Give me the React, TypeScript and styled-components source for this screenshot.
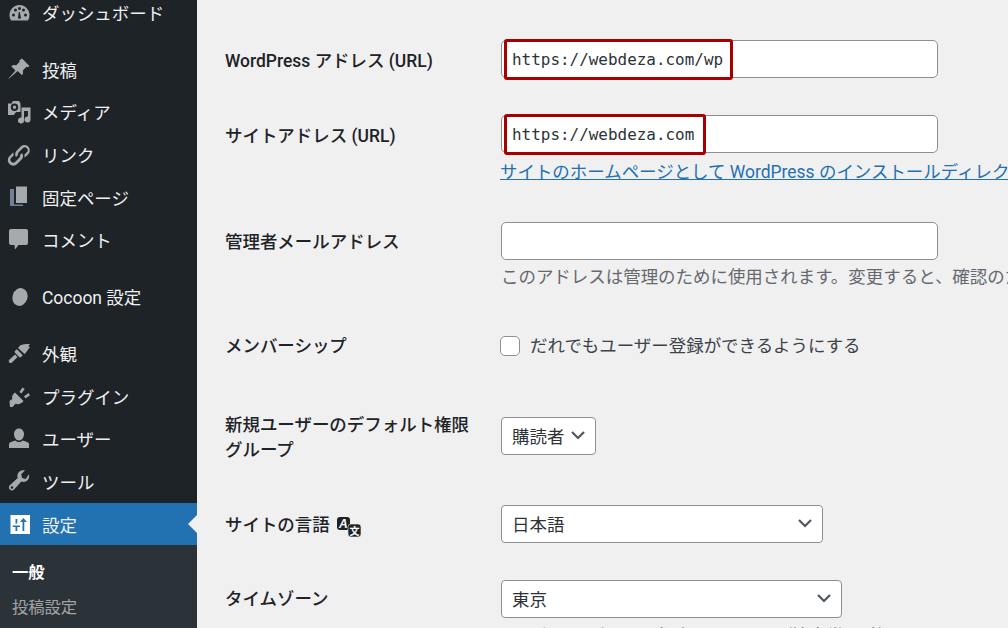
import React from "react";
import styled, { createGlobalStyle } from "styled-components";

const JP = `Roboto, "Noto Sans CJK JP", sans-serif`;

const Global = createGlobalStyle`
  html, body { margin: 0; padding: 0; height: 628px; overflow: hidden; background: #f0f0f1; }
  body { font-family: ${JP}; }
  * { box-sizing: border-box; }
`;

const Page = styled.div`
  display: flex;
  width: 1008px;
  height: 628px;
  overflow: hidden;
  font-family: ${JP};
`;
const Sidebar = styled.nav`
  flex: none;
  width: 197px;
  height: 628px;
  background: #1d2327;
  overflow: hidden;
`;
const Menu = styled.ul`
  list-style: none;
  margin: -8.8px 0 0;
  padding: 0;
`;
const MenuItem = styled.li<{ $active?: boolean; $gap?: boolean }>`
  position: relative;
  display: flex;
  align-items: center;
  height: 42.7px;
  margin-top: ${(p) => (p.$gap ? "14px" : "0")};
  padding-left: 7px;
  gap: 11px;
  font-size: 17.47px;
  color: #f0f0f1;
  background: ${(p) => (p.$active ? "#2271b1" : "transparent")};
  svg { flex: none; width: 24px; height: 24px; fill: ${(p) => (p.$active ? "#fff" : "#a7aaad")}; }
`;
const Notch = styled.span`
  position: absolute;
  right: 0;
  top: 50%;
  margin-top: -9px;
  border: 9px solid transparent;
  border-left-width: 0;
  border-right-color: #f0f0f1;
`;
const SubMenu = styled.ul`
  list-style: none;
  margin: 0;
  padding: 8px 0 0;
  height: 200px;
  background: #2c3338;
`;
const SubItem = styled.li<{ $current?: boolean }>`
  height: 35px;
  display: flex;
  align-items: center;
  padding-left: 12px;
  font-size: 16.3px;
  font-weight: ${(p) => (p.$current ? 700 : 400)};
  color: ${(p) => (p.$current ? "#fff" : "#c3c4c7cc")};
`;
const Main = styled.main`
  flex: 1;
  min-width: 0;
  padding: 40px 0 0 28px;
  background: #f0f0f1;
  color: #3c434a;
`;
const Row = styled.div<{ $h: number }>`
  display: grid;
  grid-template-columns: 276px 1fr;
  height: ${(p) => p.$h}px;
`;
const Label = styled.div<{ $pt?: number }>`
  font-size: 17.47px;
  font-weight: 500;
  line-height: 25px;
  color: #1d2327;
  padding-top: ${(p) => p.$pt ?? 9}px;
  display: flex;
  align-items: flex-start;
  gap: 7px;
`;
const Field = styled.div`
  min-width: 0;
  white-space: nowrap;
`;
const InputBox = styled.div`
  position: relative;
  width: 437px;
  height: 38px;
  background: #fff;
  border: 1px solid #8c8f94;
  border-radius: 5px;
  padding: 1px 0 0 10px;
  display: flex;
  align-items: center;
  font-family: "DejaVu Sans Mono", monospace;
  font-size: 15.95px;
  color: #2c3338;
`;
const Highlight = styled.span<{ $w: number }>`
  position: absolute;
  left: 2px;
  top: -2px;
  width: ${(p) => p.$w}px;
  height: 41px;
  border: 3px solid #a80000;
  border-radius: 3px;
`;
const LinkText = styled.a`
  display: block;
  margin: 9px 0 0 -1px;
  font-size: 17.47px;
  line-height: 20px;
  color: #2271b1;
  text-decoration: underline;
`;
const Help = styled.p`
  margin: 5px 0 0;
  font-size: 17.47px;
  line-height: 24px;
  color: #646970;
`;
const CheckRow = styled.div`
  display: flex;
  align-items: center;
  gap: 10px;
  padding-top: 7px;
  margin-left: -1px;
  font-size: 17.47px;
  line-height: 24px;
  color: #3c434a;
`;
const Check = styled.span`
  width: 20px;
  height: 20px;
  background: #fff;
  border: 1px solid #8c8f94;
  border-radius: 5px;
`;
const Select = styled.div<{ $w: number; $mt?: number }>`
  display: flex;
  align-items: center;
  justify-content: space-between;
  width: ${(p) => p.$w}px;
  height: 38px;
  margin-top: ${(p) => p.$mt ?? 0}px;
  padding: 0 9px 2px 10px;
  background: #fff;
  border: 1px solid #8c8f94;
  border-radius: 4px;
  font-size: 17.47px;
  color: #2c3338;
  svg { width: 16px; height: 16px; stroke: #50575e; fill: none; stroke-width: 2.2; }
`;
const Cut = styled.p`
  margin: 6px 0 0;
  font-size: 17.47px;
  line-height: 24px;
  color: #646970;
`;

const Chevron = () => (
  <svg viewBox="0 0 16 16"><path d="M2 5l6 6 6-6" /></svg>
);

const icons: Record<string, React.ReactNode> = {
  dash: <path transform="translate(.5 1)" d="M12 3C6.500 3 2 7.500 2 13c0 2 .6 4 1.600 5.500h16.800C21.400 17 22 15 22 13c0-5.500-4.500-10-10-10zM6 14.500a1.500 1.500 0 1 1 0-3 1.500 1.500 0 0 1 0 3zm2-5a1.500 1.500 0 1 1 0-3 1.500 1.500 0 0 1 0 3zM12 8a1.500 1.500 0 1 1 0-3 1.500 1.500 0 0 1 0 3zm1.600 8.500h-3.200l.9-6.500 1 0zM18 14.500a1.500 1.500 0 1 1 0-3 1.500 1.500 0 0 1 0 3zm-2-5a1.500 1.500 0 1 1 0-3 1.500 1.500 0 0 1 0 3z" />,
  pin: <path d="M15 1.500l7.500 7.500-1.700 1.200-1.300-.5-3.700 3.700c.6 1.800.2 3.500-.8 4.800l-4.300-4.300L1.500 22l-.2-.2 7.200-8.300-4.300-4.300c1.300-1 3-1.400 4.800-.8l3.700-3.700-.5-1.300z" />,
  media: <path fillRule="evenodd" d="M1 3.500h3.500L6 1h6l1.500 2.500V12H9.500a5 5 0 0 0-2.500 3H1zM7.500 11a3.700 3.700 0 1 0 0-7.400 3.700 3.700 0 0 0 0 7.400zm0-2a1.700 1.700 0 1 1 0-3.400 1.700 1.700 0 0 1 0 3.400zM23.500 7.500V19.500a3 3 0 1 1-2.500-3V11h-4v9.500a3 3 0 1 1-2.500-3v-10z" />,
  link: <path fillRule="evenodd" d="M17.500 2c-1.400 0-2.700.5-3.700 1.500l-4 4a5.500 5.500 0 0 0-.8 6.600l2-2a3 3 0 0 1 .8-2.800l4-4a2.800 2.800 0 0 1 4 4l-2.500 2.500c.3.900.5 1.900.4 3l4-4A5.500 5.500 0 0 0 17.500 2zm-2.500 8l-2 2c.3 1 .1 2-.7 2.800l-4 4a2.800 2.800 0 0 1-4-4L6.800 12.300c-.3-.9-.5-1.900-.4-3l-4 4a5.500 5.500 0 0 0 7.800 7.800l4-4a5.500 5.500 0 0 0 .8-7.100z" />,
  page: <g><path d="M9 1.500h11V18H9z" /><path d="M7 4H3v17h13v-1.500H7z" fill="#6f8296" /></g>,
  comment: <path d="M4 1h15a2 2 0 0 1 2 2v12a2 2 0 0 1-2 2h-7.500L8 21.500 7.500 17H4a2 2 0 0 1-2-2V3a2 2 0 0 1 2-2z" />,
  cocoon: <ellipse cx="13" cy="12" rx="7.500" ry="9" transform="rotate(18 13 12)" />,
  brush: <path d="M13 4.500c2.500-1.500 5.500-1.500 10-1.500-1 1-1.500 2-1.500 2.500L23 6c-1.500 2-3 4.500-5.500 7L11 7zM9.800 8.200l6 6-1.800 1.800c-.5.500-1.300.5-1.800 0l-4.200-4.200c-.5-.5-.5-1.300 0-1.800zM8 13.500l2.500 2.500-5.500 5.500c-.8.700-2 .7-2.700 0s-.7-2 0-2.700z" />,
  plug: <path d="M15.500 3.500l2.200 1.600-3.200 4.400-2.200-1.600zM21.500 9l1.500 2.200-4.500 3.200-1.500-2.200zM8 8.500l8.500 8.500c-2 2.800-5 3.800-8 2.800L5.500 23H3l-.5-6 2.800-2c-.7-2.500.2-4.500 2.700-6.500z" />,
  user: <path d="M12 1.500c3 0 5 2.500 5 5.500s-2 6.500-5 6.500S7 10 7 7s2-5.500 5-5.500zM2 21v-3.500c0-1 .5-1.800 1.500-2.200 1.500-.7 3.500-1.300 5-1.800 1 1 2.200 1.500 3.500 1.500s2.500-.5 3.500-1.500c1.500.5 3.500 1.100 5 1.800 1 .4 1.500 1.200 1.500 2.200V21z" />,
  wrench: <path fillRule="evenodd" d="M21.800 5.200c.8 2.100.3 4.500-1.300 6.100-1.700 1.700-4.100 2.100-6.200 1.300L7.100 20.400a3 3 0 0 1-4.300.1c-1.200-1.200-1.200-3.100 0-4.300l7.900-7.100c-.8-2.100-.3-4.500 1.300-6.100C13.700 1.300 16 .8 18 1.500l-3.800 3.700.9 3.700 3.700 1zM5 19.800a1.300 1.300 0 1 0 0-2.600 1.300 1.300 0 0 0 0 2.600z" />,
  sliders: <path fillRule="evenodd" d="M3.500 3h19.500v19H3.500zM8.500 19h1.800v-4h2.700v-1.500H5.800V15h2.700zM15.500 19h1.800V10H20l-3.600-4L13 10h2.500zM8.500 7v4.500h1.800V7z" />,
};

const Ico = ({ n }: { n: string }) => <svg viewBox="0 0 24 24">{icons[n]}</svg>;

const items: { n: string; t: string; gap?: boolean; active?: boolean }[] = [
  { n: "dash", t: "ダッシュボード" },
  { n: "pin", t: "投稿", gap: true },
  { n: "media", t: "メディア" },
  { n: "link", t: "リンク" },
  { n: "page", t: "固定ページ" },
  { n: "comment", t: "コメント" },
  { n: "cocoon", t: "Cocoon 設定", gap: true },
  { n: "brush", t: "外観", gap: true },
  { n: "plug", t: "プラグイン" },
  { n: "user", t: "ユーザー" },
  { n: "wrench", t: "ツール" },
  { n: "sliders", t: "設定", active: true },
];

const Translate = styled.svg`
  width: 24px;
  height: 24px;
  flex: none;
  margin-top: 4px;
`;

export default function App() {
  return (
    <>
      <Global />
      <Page>
        <Sidebar>
          <Menu>
            {items.map((i) => (
              <MenuItem key={i.t} $gap={i.gap} $active={i.active}>
                <Ico n={i.n} />
                <span>{i.t}</span>
                {i.active && <Notch />}
              </MenuItem>
            ))}
          </Menu>
          <SubMenu>
            <SubItem $current>一般</SubItem>
            <SubItem>投稿設定</SubItem>
          </SubMenu>
        </Sidebar>
        <Main>
          <Row $h={75}>
            <Label>WordPress アドレス (URL)</Label>
            <Field>
              <InputBox>https://webdeza.com/wp<Highlight $w={229} /></InputBox>
            </Field>
          </Row>
          <Row $h={107}>
            <Label>サイトアドレス (URL)</Label>
            <Field>
              <InputBox>https://webdeza.com<Highlight $w={202} /></InputBox>
              <LinkText>サイトのホームページとして WordPress のインストールディレクトリとは異なる場所を設定する</LinkText>
            </Field>
          </Row>
          <Row $h={105}>
            <Label $pt={8}>管理者メールアドレス</Label>
            <Field>
              <InputBox />
              <Help>このアドレスは管理のために使用されます。変更すると、確認のため新しいアドレスにメールを送信します。</Help>
            </Field>
          </Row>
          <Row $h={77}>
            <Label $pt={7}>メンバーシップ</Label>
            <Field>
              <CheckRow><Check />だれでもユーザー登録ができるようにする</CheckRow>
            </Field>
          </Row>
          <Row $h={101}>
            <Label $pt={9}>新規ユーザーのデフォルト権限<br />グループ</Label>
            <Field>
              <Select $w={95} $mt={13}>購読者<Chevron /></Select>
            </Field>
          </Row>
          <Row $h={75}>
            <Label $pt={8}>
              サイトの言語
              <Translate viewBox="0 0 24 24">
                <rect x="0" y="0" width="13" height="13" rx="3" fill="#1d2327" />
                <text x="2" y="11" fontSize="12" fontWeight="700" fontStyle="italic" fill="#fff" fontFamily="Liberation Sans">A</text>
                <rect x="11" y="7" width="13" height="13" rx="3" fill="#1d2327" stroke="#f0f0f1" strokeWidth=".6" />
                <text x="12.500" y="18" fontSize="10" fontWeight="700" fill="#fff" fontFamily="Noto Sans CJK SC">文</text>
              </Translate>
            </Label>
            <Field>
              <Select $w={322}>日本語<Chevron /></Select>
            </Field>
          </Row>
          <Row $h={60}>
            <Label $pt={7}>タイムゾーン</Label>
            <Field>
              <Select $w={341}>東京<Chevron /></Select>
              <Cut>同じタイムゾーンの都市または UTC (協定世界時) のオフセットを選択</Cut>
            </Field>
          </Row>
        </Main>
      </Page>
    </>
  );
}
